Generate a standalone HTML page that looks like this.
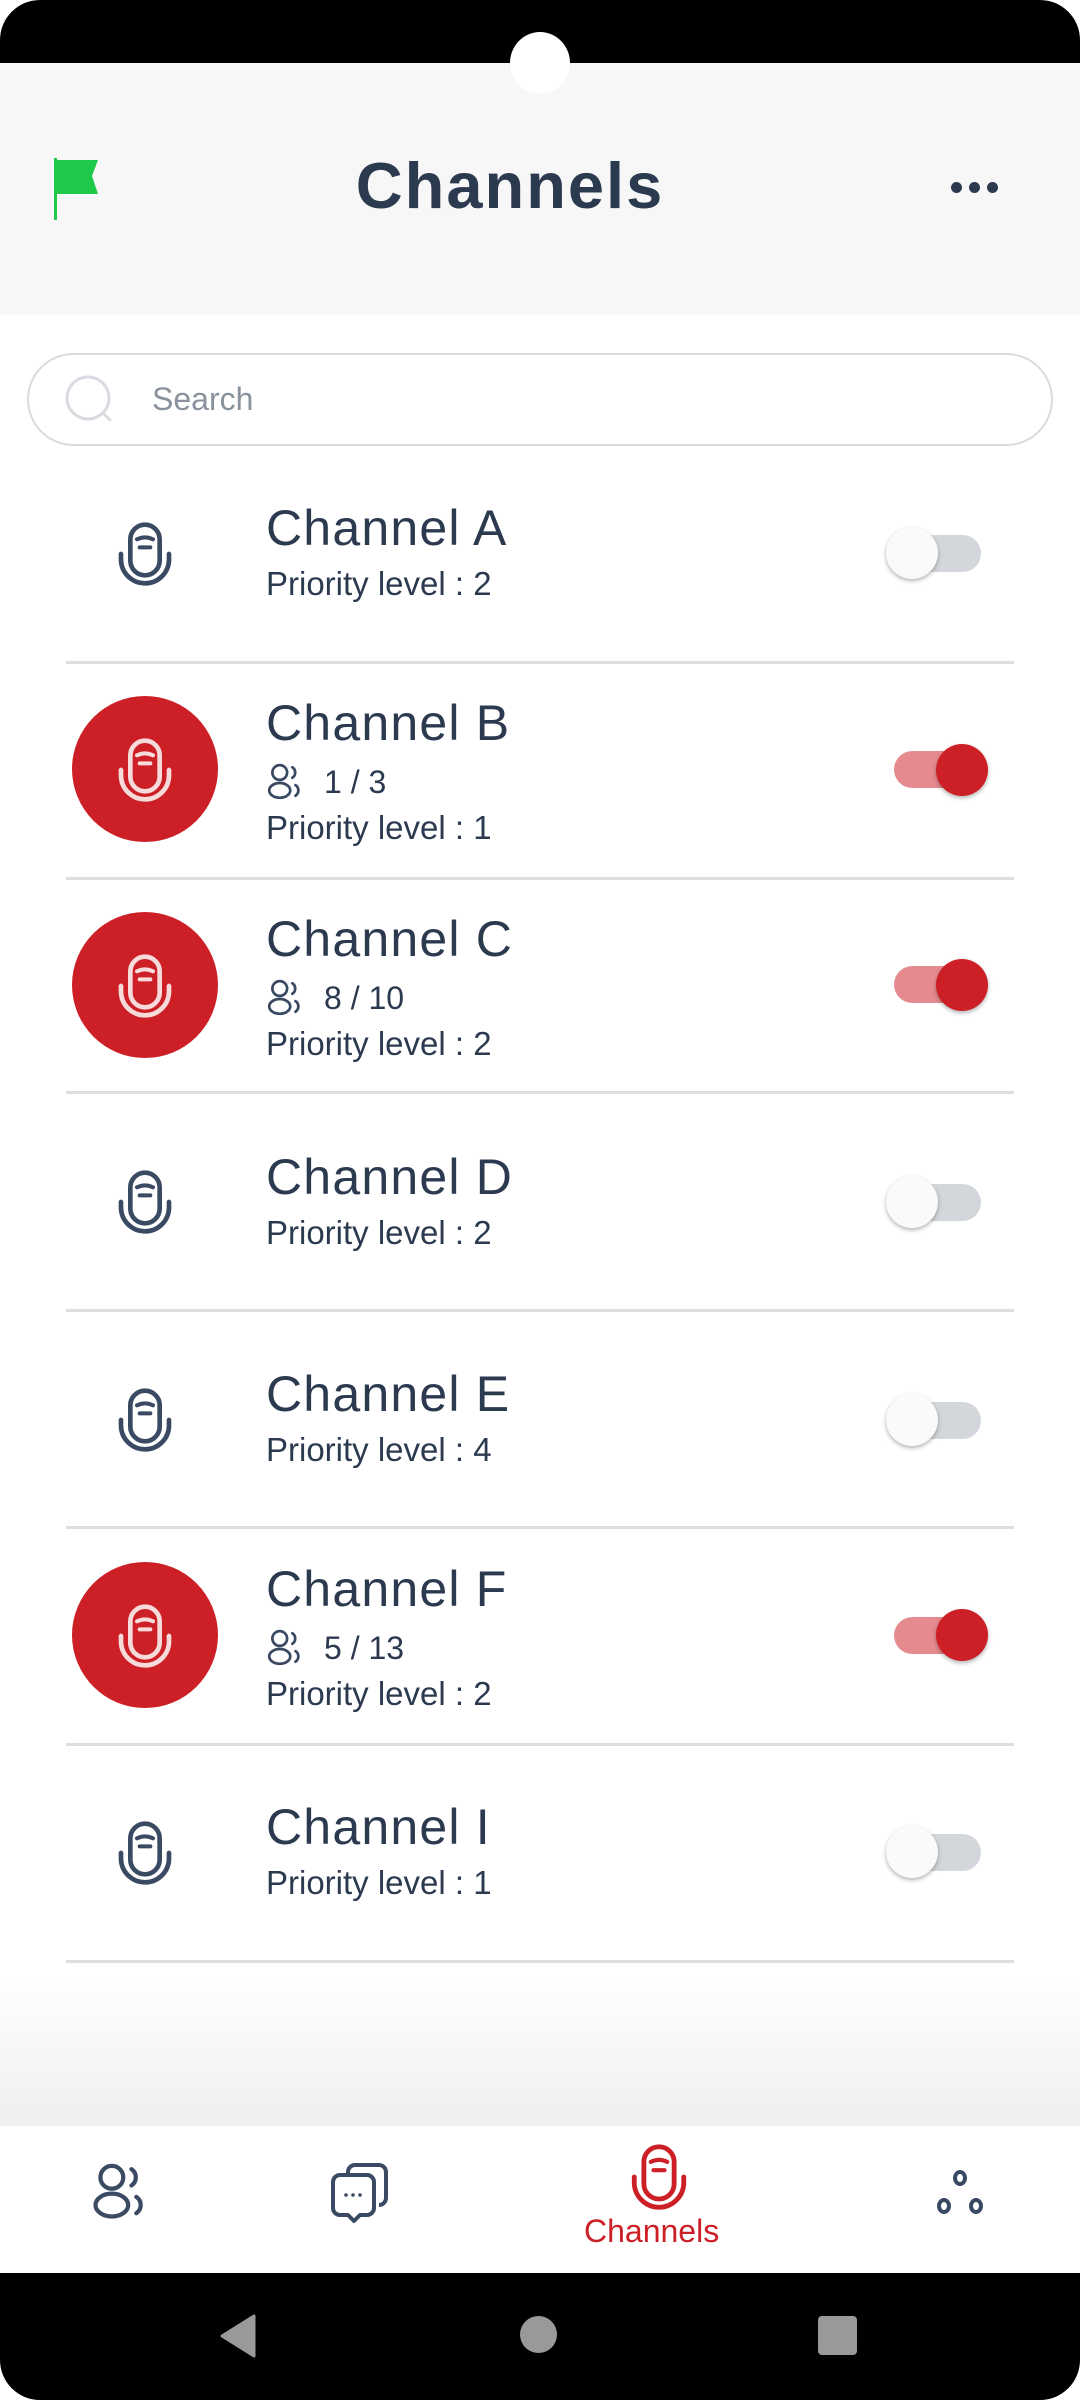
<!DOCTYPE html>
<html><head><meta charset="utf-8"><style>
*{margin:0;padding:0;box-sizing:border-box}
body{width:1080px;height:2400px;position:relative;background:#fff;font-family:"Liberation Sans",sans-serif;color:#2c3a50;overflow:hidden}
.abs{position:absolute}
.title{position:absolute;left:266px;font-size:50px;letter-spacing:1.2px;line-height:1;color:#2c3a50;margin-top:-3px}
.prio{position:absolute;left:266px;font-size:33px;line-height:1;color:#2c3a50;margin-top:-1px}
.users{position:absolute;left:266px;font-size:32px;line-height:1;color:#2c3a50}
.sep{position:absolute;left:66px;width:948px;height:3px;background:#dcdee2}
.circ{position:absolute;left:72px;width:146px;height:146px;border-radius:50%;background:#cc1f26}
.mic{position:absolute;left:117px;width:56px;height:64px}
.toff .tr{position:absolute;left:886px;width:95px;height:37px;border-radius:19px;background:#d3d6db}
.toff .kn{position:absolute;left:886px;width:52px;height:52px;border-radius:50%;background:#fafafa;box-shadow:0 2px 4px rgba(0,0,0,.3)}
.ton .tr{position:absolute;left:894px;width:80px;height:37px;border-radius:19px;background:#e58b90}
.ton .kn{position:absolute;left:936px;width:52px;height:52px;border-radius:50%;background:#cc1f26;box-shadow:0 2px 4px rgba(0,0,0,.3)}
</style></head><body>
<div class="abs" style="left:0;top:0;width:1080px;height:63px;background:#000;border-radius:40px 40px 0 0"></div>
<div class="abs" style="left:0;top:63px;width:1080px;height:252px;background:#f7f7f7"></div>
<div class="abs" style="left:510px;top:32px;width:60px;height:62px;border-radius:50%;background:#fff"></div>
<svg class="abs" style="left:52px;top:156px" width="52" height="66" viewBox="0 0 52 66"><rect x="2" y="2" width="3" height="62" fill="#1ec94a"/><path d="M4 4 H46 L40 20 L46 38 H4 Z" fill="#1ec94a"/></svg>
<div class="abs" style="left:0;width:1020px;top:148px;text-align:center;font-size:65px;font-weight:bold;color:#2c3a50;letter-spacing:2px">Channels</div>
<div class="abs" style="left:951px;top:182px"><span style="position:absolute;left:0;width:11px;height:11px;border-radius:50%;background:#2c3a50"></span><span style="position:absolute;left:18px;width:11px;height:11px;border-radius:50%;background:#2c3a50"></span><span style="position:absolute;left:36px;width:11px;height:11px;border-radius:50%;background:#2c3a50"></span></div>
<div class="abs" style="left:27px;top:353px;width:1026px;height:93px;border:2px solid #d8dbe0;border-radius:47px"></div>
<svg class="abs" style="left:62px;top:372px" width="56" height="56" viewBox="0 0 56 56"><circle cx="26" cy="26" r="21" fill="none" stroke="#d8dbe0" stroke-width="3"/><path d="M41 41 L48 48" stroke="#d8dbe0" stroke-width="3" stroke-linecap="round"/></svg>
<div class="abs" style="left:152px;top:381px;font-size:32px;color:#8a929e">Search</div>

<svg width="0" height="0" style="position:absolute"><defs>
<g id="mic"><rect x="15" y="4" width="22" height="38" rx="11" fill="none" stroke-width="3.5"/><path d="M20 15 Q26 12 32 15" fill="none" stroke-width="3" stroke-linecap="round"/><path d="M22 21 H30" stroke-width="3" stroke-linecap="round"/><path d="M8 26 V30 A18 18 0 0 0 44 30 V26" fill="none" stroke-width="3.5" stroke-linecap="round"/></g>
<g id="ppl"><circle cx="13" cy="10" r="7" fill="none" stroke-width="2.6"/><ellipse cx="13" cy="27" rx="10" ry="7" fill="none" stroke-width="2.6"/><path d="M25 5 A6 6 0 0 1 25 15 M28 22 A6 6 0 0 1 28 32" fill="none" stroke-width="2.6" stroke-linecap="round"/></g>
</defs></svg>

<svg class="mic" style="top:522px" viewBox="6 2 40 48" stroke="#3b4a63"><use href="#mic"/></svg>
<div class="title" style="top:506px">Channel A</div>
<div class="prio" style="top:568px">Priority level : 2</div>
<div class="toff"><div class="tr" style="top:535px"></div><div class="kn" style="top:527px"></div></div>
<div class="sep" style="top:661px"></div>

<div class="circ" style="top:696px"></div>
<svg class="mic" style="top:738px" viewBox="6 2 40 48" stroke="#f7dada"><use href="#mic"/></svg>
<div class="title" style="top:701px">Channel B</div>
<svg class="abs" style="left:266px;top:762px" width="38" height="40" viewBox="0 0 36 38" stroke="#3b4a63"><use href="#ppl"/></svg>
<div class="users" style="left:324px;top:766px">1 / 3</div>
<div class="prio" style="top:812px">Priority level : 1</div>
<div class="ton"><div class="tr" style="top:751px"></div><div class="kn" style="top:744px"></div></div>
<div class="sep" style="top:877px"></div>

<div class="circ" style="top:912px"></div>
<svg class="mic" style="top:954px" viewBox="6 2 40 48" stroke="#f7dada"><use href="#mic"/></svg>
<div class="title" style="top:917px">Channel C</div>
<svg class="abs" style="left:266px;top:978px" width="38" height="40" viewBox="0 0 36 38" stroke="#3b4a63"><use href="#ppl"/></svg>
<div class="users" style="left:324px;top:982px">8 / 10</div>
<div class="prio" style="top:1028px">Priority level : 2</div>
<div class="ton"><div class="tr" style="top:966px"></div><div class="kn" style="top:959px"></div></div>
<div class="sep" style="top:1091px"></div>

<svg class="mic" style="top:1170px" viewBox="6 2 40 48" stroke="#3b4a63"><use href="#mic"/></svg>
<div class="title" style="top:1155px">Channel D</div>
<div class="prio" style="top:1217px">Priority level : 2</div>
<div class="toff"><div class="tr" style="top:1184px"></div><div class="kn" style="top:1176px"></div></div>
<div class="sep" style="top:1309px"></div>

<svg class="mic" style="top:1388px" viewBox="6 2 40 48" stroke="#3b4a63"><use href="#mic"/></svg>
<div class="title" style="top:1372px">Channel E</div>
<div class="prio" style="top:1434px">Priority level : 4</div>
<div class="toff"><div class="tr" style="top:1402px"></div><div class="kn" style="top:1394px"></div></div>
<div class="sep" style="top:1526px"></div>

<div class="circ" style="top:1562px"></div>
<svg class="mic" style="top:1604px" viewBox="6 2 40 48" stroke="#f7dada"><use href="#mic"/></svg>
<div class="title" style="top:1567px">Channel F</div>
<svg class="abs" style="left:266px;top:1628px" width="38" height="40" viewBox="0 0 36 38" stroke="#3b4a63"><use href="#ppl"/></svg>
<div class="users" style="left:324px;top:1632px">5 / 13</div>
<div class="prio" style="top:1678px">Priority level : 2</div>
<div class="ton"><div class="tr" style="top:1617px"></div><div class="kn" style="top:1609px"></div></div>
<div class="sep" style="top:1743px"></div>

<svg class="mic" style="top:1821px" viewBox="6 2 40 48" stroke="#3b4a63"><use href="#mic"/></svg>
<div class="title" style="top:1805px">Channel I</div>
<div class="prio" style="top:1867px">Priority level : 1</div>
<div class="toff"><div class="tr" style="top:1834px"></div><div class="kn" style="top:1826px"></div></div>
<div class="sep" style="top:1960px"></div>

<div class="abs" style="left:0;top:1975px;width:1080px;height:152px;background:linear-gradient(#fff,#eeeff1)"></div>
<div class="abs" style="left:0;top:2126px;width:1080px;height:147px;background:#fff"></div>
<svg class="abs" style="left:90px;top:2161px" width="60" height="62" viewBox="0 0 36 38" stroke="#3b4a63"><use href="#ppl"/></svg>
<svg class="abs" style="left:330px;top:2162px" width="60" height="62" viewBox="0 0 60 62" fill="none" stroke="#3b4a63" stroke-width="4"><path d="M18 12 V10 A7 7 0 0 1 25 3 H49 A7 7 0 0 1 56 10 V36 A7 7 0 0 1 49 43"/><path d="M10 13 H37 A7 7 0 0 1 44 20 V46 A7 7 0 0 1 37 53 H30 L24 59 L18 53 H10 A7 7 0 0 1 3 46 V20 A7 7 0 0 1 10 13 Z" stroke-linejoin="round"/><circle cx="16" cy="33" r="1.8" fill="#3b4a63" stroke="none"/><circle cx="23" cy="33" r="1.8" fill="#3b4a63" stroke="none"/><circle cx="30" cy="33" r="1.8" fill="#3b4a63" stroke="none"/></svg>
<svg class="abs" style="left:629px;top:2144px" width="60" height="66" viewBox="6 2 40 48" stroke="#cc1f26"><use href="#mic"/></svg>
<div class="abs" style="left:584px;top:2213px;font-size:32px;color:#cc1f26">Channels</div>
<svg class="abs" style="left:936px;top:2170px" width="48" height="46" viewBox="0 0 48 46" fill="none" stroke="#3b4a63" stroke-width="4"><ellipse cx="24" cy="8" rx="5" ry="6"/><ellipse cx="8" cy="36" rx="5" ry="6"/><ellipse cx="40" cy="36" rx="5" ry="6"/></svg>
<div class="abs" style="left:0;top:2273px;width:1080px;height:127px;background:#000;border-radius:0 0 40px 40px"></div>
<svg class="abs" style="left:218px;top:2314px" width="40" height="44" viewBox="0 0 40 44"><path d="M36 2 V42 L4 22 Z" fill="#999" stroke="#999" stroke-width="3" stroke-linejoin="round"/></svg>
<div class="abs" style="left:520px;top:2316px;width:37px;height:37px;border-radius:50%;background:#999"></div>
<div class="abs" style="left:818px;top:2316px;width:39px;height:39px;border-radius:4px;background:#999"></div>
</body></html>
